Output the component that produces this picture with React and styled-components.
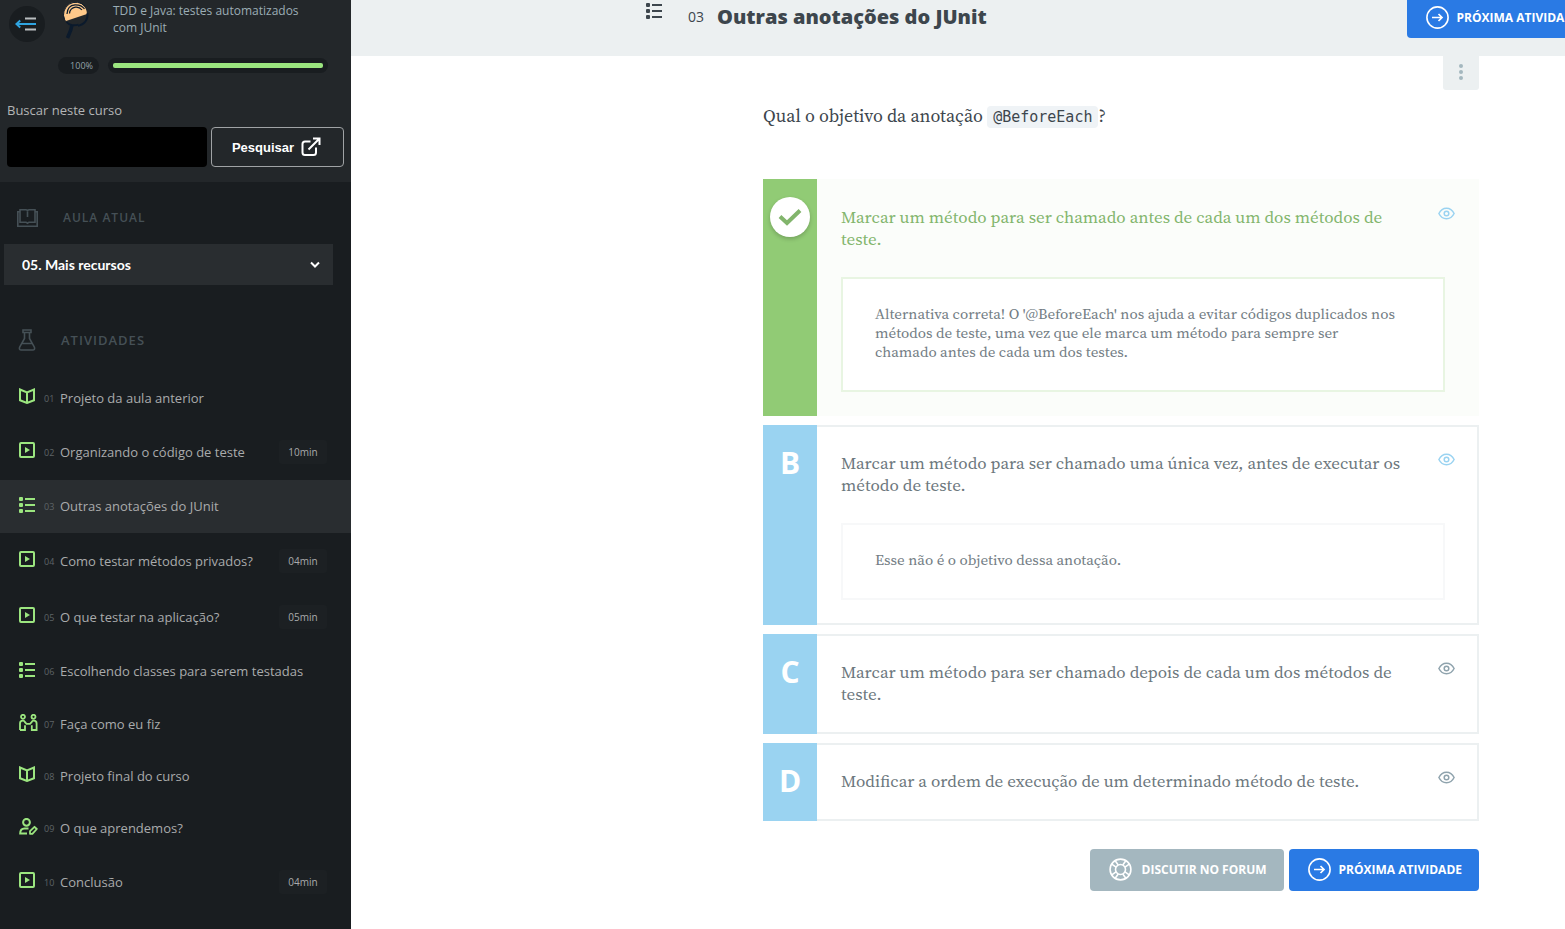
import { useState } from 'react';
import styled, { createGlobalStyle } from 'styled-components';

const GlobalStyle = createGlobalStyle`
  * {
    box-sizing: border-box;
  }

  body {
    margin: 0;
    background-color: #ffffff;
    font-family: 'Open Sans', 'Noto Sans', sans-serif;
    overflow-x: hidden;
  }

  h1, h2, p, ul {
    margin: 0;
    padding: 0;
  }

  ul {
    list-style: none;
  }

  button {
    font-family: inherit;
    cursor: pointer;
  }

  svg {
    display: block;
    flex-shrink: 0;
  }
`;

const serif = "'Source Serif Pro', 'Source Serif 4', 'Noto Serif CJK SC', 'Noto Serif CJK JP', 'Noto Serif', 'Liberation Serif', serif";

const Page = styled.div`
  display: flex;
  min-height: 100vh;
`;

const Sidebar = styled.aside`
  width: 351px;
  flex-shrink: 0;
  background-color: #191d20;
`;

const CourseHeader = styled.header`
  padding: 2px 7px 15px;
  background-color: #23272a;
`;

const CourseTop = styled.div`
  display: flex;
  align-items: flex-start;
`;

const MenuButton = styled.button`
  display: flex;
  align-items: center;
  justify-content: center;
  width: 36px;
  height: 36px;
  margin: 4px 16px 0 2px;
  padding: 0 2px 0 0;
  border: none;
  border-radius: 50%;
  background-color: #191d20;
`;

const CourseName = styled.a`
  display: flex;
  flex: 1;
  gap: 22px;
  color: #9badb5;
  font-size: 12px;
  line-height: 17px;
  text-decoration: none;

  span {
    max-width: 200px;
  }
`;

const Progress = styled.div`
  display: flex;
  align-items: center;
  gap: 9px;
  margin: 15px 16px 0 51px;
`;

const Percent = styled.span`
  width: 41px;
  padding-right: 6px;
  border-radius: 9px;
  background-color: #191d20;
  color: #94a3aa;
  font-size: 9px;
  line-height: 17px;
  text-align: right;
`;

const Track = styled.div`
  flex: 1;
  padding: 5px;
  border-radius: 8px;
  background-color: #191d20;

  div {
    height: 5px;
    border-radius: 2px;
    background-color: #9be57f;
  }
`;

const Search = styled.form`
  margin-top: 27px;

  label {
    display: block;
    color: #b3b5b6;
    font-size: 13px;
    line-height: 18px;
  }

  div {
    display: flex;
    gap: 4px;
    margin-top: 8px;
  }

  input {
    flex: 1;
    min-width: 0;
    height: 40px;
    padding: 0 12px;
    border: none;
    border-radius: 4px;
    background-color: #000000;
    color: #ffffff;
  }

  button {
    display: flex;
    align-items: center;
    justify-content: center;
    gap: 7px;
    width: 133px;
    height: 40px;
    padding: 0 2px 0 0;
    border: 1px solid #a0a3a5;
    border-radius: 4px;
    background: none;
    color: #ffffff;
    font-family: 'Liberation Sans', Arial, sans-serif;
    font-size: 13px;
    font-weight: bold;
  }
`;

const SectionTitle = styled.h2`
  display: flex;
  align-items: center;
  gap: 25px;
  padding-left: 17px;
  color: #455056;
  font-size: ${({ $large }) => ($large ? '13px' : '12px')};
  font-weight: 600;
  letter-spacing: 1px;
  line-height: 22px;
  text-transform: uppercase;
`;

const LessonSection = styled.section`
  padding: 25px 18px 0 0;
`;

const SelectBox = styled.div`
  position: relative;
  margin: 15px 0 0 4px;

  select {
    width: 100%;
    height: 41px;
    padding: 0 18px;
    border: none;
    border-radius: 0;
    appearance: none;
    background-color: #292d30;
    color: #ffffff;
    font-family: Lato, sans-serif;
    font-size: 14px;
    font-weight: bold;
  }

  svg {
    position: absolute;
    top: 17px;
    right: 13px;
    pointer-events: none;
  }
`;

const ActivitySection = styled.section`
  padding: 44px 0 19px;
`;

const ActivityList = styled.ul`
  margin-top: 21px;
`;

const rowHeights = { video: 56, quiz: 53 };

const Activity = styled.li`
  a {
    display: flex;
    align-items: center;
    height: ${({ $kind }) => rowHeights[$kind] || 52}px;
    padding: 0 24px 0 19px;
    background-color: ${({ $active }) => ($active ? '#292d30' : 'transparent')};
    color: #a9abac;
    font-size: 13px;
    line-height: 17px;
    text-decoration: none;
  }
`;

const ActivityIcon = styled.span`
  width: 18px;
  margin: 0 7px 4px 0;
  color: #9be57f;
`;

const ActivityNumber = styled.span`
  width: 16px;
  color: #5e6467;
  font-size: 9px;
`;

const ActivityName = styled.span`
  flex: 1;
`;

const Duration = styled.span`
  width: 48px;
  border-radius: 3px;
  background-color: #1c2023;
  color: #a9abac;
  font-size: 10px;
  line-height: 24px;
  text-align: center;
`;

const Main = styled.main`
  flex: 1;
  min-width: 0;
`;

const TitleBar = styled.header`
  display: flex;
  align-items: flex-start;
  height: 56px;
  padding-left: 295px;
  background-color: #ecf0f1;
  color: #3d464d;
  overflow: hidden;

  > svg {
    margin-top: 3px;
  }
`;

const Title = styled.h1`
  display: flex;
  flex: 1;
  align-items: center;
  gap: 13px;
  margin-left: 25px;
  font-size: 20px;
  font-weight: 800;
  line-height: 34px;
  white-space: nowrap;

  span {
    font-size: 14px;
    font-weight: 400;
  }
`;

const ActionButton = styled.button`
  display: flex;
  align-items: center;
  gap: ${({ $muted }) => ($muted ? '10px' : '8px')};
  height: 42px;
  padding: 0 17px 2px 19px;
  border: none;
  border-radius: 4px;
  background-color: ${({ $muted }) => ($muted ? '#a4b7bf' : '#2a7ae4')};
  color: #ffffff;
  font-size: 12px;
  font-weight: 700;
  text-transform: uppercase;
  white-space: nowrap;
`;

const TopButton = styled(ActionButton)`
  height: 38px;
  margin-right: -32px;
  padding-bottom: 4px;
  border-radius: 0 0 4px 4px;
`;

const Content = styled.div`
  max-width: 716px;
  margin: 0 86px 38px auto;
`;

const MoreButton = styled.button`
  display: flex;
  align-items: center;
  justify-content: center;
  width: 36px;
  height: 34px;
  margin-left: auto;
  padding: 0 0 2px;
  border: none;
  border-radius: 0 0 3px 3px;
  background-color: #ecf0f1;
`;

const Question = styled.p`
  margin-top: 14px;
  color: #3d464d;
  font-family: ${serif};
  font-size: 18px;
  line-height: 24px;

  code {
    padding: 2px 6px;
    border-radius: 4px;
    background-color: #eff3f6;
    font-family: 'DejaVu Sans Mono', monospace;
    font-size: 15px;
  }
`;

const Options = styled.ul`
  display: flex;
  flex-direction: column;
  gap: 9px;
  margin-top: 50px;
`;

const Option = styled.li`
  display: flex;
  background-color: ${({ $correct }) => ($correct ? '#fbfdfa' : '#ffffff')};
`;

const OptionLetter = styled.div`
  display: flex;
  justify-content: center;
  width: 54px;
  flex-shrink: 0;
  padding-top: 18px;
  background-color: ${({ $correct }) => ($correct ? '#91cb75' : '#9ad3f1')};
  color: #ffffff;
  font-size: 30px;
  font-weight: 700;
  line-height: 40px;
`;

const CheckCircle = styled.div`
  display: flex;
  align-items: center;
  justify-content: center;
  width: 40px;
  height: 40px;
  border-radius: 50%;
  background-color: #ffffff;
  box-shadow: 0 2px 4px rgba(0, 0, 0, 0.2);
`;

const OptionBody = styled.div`
  flex: 1;
  padding: 25px 32px ${({ $open }) => ($open ? '23px' : '27px')} 24px;
  border: 2px solid #ecf0f1;
  border-left: none;
  ${({ $correct }) => $correct && 'border: none; padding: 27px 34px 24px 24px;'}
`;

const OptionHead = styled.div`
  display: flex;
  align-items: flex-start;
  justify-content: space-between;
  gap: 24px;

  p {
    color: ${({ $correct }) => ($correct ? '#82b56c' : '#6c777d')};
    font-family: ${serif};
    font-size: 17px;
    line-height: 22px;
  }
`;

const EyeButton = styled.button`
  margin: 0 -10px 0 0;
  padding: 0;
  border: none;
  background: none;
  color: ${({ $seen }) => ($seen ? '#9ad3f1' : '#8fa3ad')};
`;

const Feedback = styled.p`
  margin-top: 27px;
  padding: 25px 42px 29px 32px;
  border: 2px solid ${({ $correct }) => ($correct ? '#e8f5e2' : '#f7f8f9')};
  background-color: #ffffff;
  color: #737d84;
  font-family: ${serif};
  font-size: 15px;
  line-height: 19px;
`;

const Actions = styled.div`
  display: flex;
  justify-content: flex-end;
  gap: 5px;
  margin-top: 28px;
`;

const ListIcon = () => (
  <svg width="17" height="16" viewBox="0 0 17 16" fill="currentColor">
    <rect x="0" y="0" width="4" height="4" rx="1" />
    <rect x="0" y="6" width="4" height="4" rx="1" />
    <rect x="0" y="12" width="4" height="4" rx="1" />
    <path d="M6 1h10v2H6zM6 7h10v2H6zM6 13h10v2H6z" />
  </svg>
);

const BookIcon = () => (
  <svg width="17" height="16" viewBox="0 0 17 16" fill="none" stroke="currentColor" strokeWidth="2">
    <path d="M1 1.5L8 4.5L15 1.5V12.2L8 15L1 12.2ZM8 4.5V15" />
  </svg>
);

const VideoIcon = () => (
  <svg width="17" height="16" viewBox="0 0 17 16">
    <rect x="1" y="1" width="14" height="14" rx="1" fill="none" stroke="currentColor" strokeWidth="2" />
    <path d="M6 5L11 8L6 11Z" fill="currentColor" />
  </svg>
);

const PeopleIcon = () => (
  <svg width="19" height="17" viewBox="0 0 19 17" fill="none" stroke="currentColor" strokeWidth="1.8">
    <circle cx="4" cy="2.8" r="2" />
    <circle cx="14.5" cy="2.8" r="2" />
    <path d="M1 16V9.5Q1 6.7 3.8 6.7Q5.4 6.7 6 8.2L7.5 9.8H11L12.6 8.2Q13.2 6.7 14.8 6.7Q17.6 6.7 17.6 9.5V16H12.8V11.2M6 11.2V16H1" />
  </svg>
);

const UserEditIcon = () => (
  <svg width="19" height="17" viewBox="0 0 19 17" fill="none" stroke="currentColor" strokeWidth="2">
    <circle cx="7.5" cy="4.3" r="3.4" />
    <path d="M9.5 10.5H5.5Q1.2 10.5 1.2 15.5H8" />
    <path d="M11 15.8V13.2L15.5 8.8L17.8 11L13.4 15.8Z" strokeWidth="1.8" strokeLinejoin="round" />
  </svg>
);

const icons = {
  text: BookIcon,
  video: VideoIcon,
  quiz: ListIcon,
  people: PeopleIcon,
  review: UserEditIcon,
};

const MenuIcon = () => (
  <svg width="22" height="16" viewBox="0 0 22 16" fill="none" strokeWidth="2">
    <path d="M10 2.5H21M10 13.5H21" stroke="#b9bdbf" />
    <path d="M21 8H2M5.2 4.6L1.4 8L5.2 11.4" stroke="#2fa4e0" />
  </svg>
);

const CourseLogo = () => (
  <svg width="30" height="37" viewBox="0 0 30 37" fill="none">
    <path d="M5 19A11.7 11.7 0 1 1 26 12Z" fill="#ffc98a" />
    <path d="M3.5 17.5A12.4 12.4 0 0 1 24 4.2" stroke="#0b1a2c" />
    <path d="M6 12Q6.5 3.2 14 2.8Q20.5 2.6 23.5 7M8.5 11.5Q9 6 14.5 5.2Q18.5 4.8 21 8" stroke="#0b1a2c" strokeWidth="1.2" />
    <path d="M5.5 20Q7.5 22.5 11 23.2Q15 23.5 17.5 22.5M26.5 11Q27.5 21 17 24" stroke="#0b1a2c" strokeWidth="1.8" />
    <path d="M10.8 23.5L9.8 28L6.5 36" stroke="#0b1a2c" strokeWidth="3.5" />
  </svg>
);

const ExternalIcon = () => (
  <svg width="20" height="20" viewBox="0 0 20 20" fill="none" stroke="currentColor" strokeWidth="2">
    <path d="M9.5 4.5H4Q1.5 4.5 1.5 7V15.5Q1.5 18 4 18H12.5Q15 18 15 15.5V10.5M7.5 12.5L18 2M12 1.5H18.5V8" />
  </svg>
);

const LessonIcon = () => (
  <svg width="21" height="18" viewBox="0 0 21 18" fill="none" stroke="currentColor" strokeWidth="1.6">
    <path d="M3 2.8H.8V17.2H20.2V2.8H18M3 .8H9Q10.5 .8 10.5 2.3Q10.5 .8 12 .8H18V13.2H12L10.5 14.2L9 13.2H3ZM10.5 2.5V8" />
  </svg>
);

const FlaskIcon = () => (
  <svg width="19" height="22" viewBox="0 0 19 22" fill="none" stroke="currentColor" strokeWidth="1.6">
    <path d="M6 1H14V3.5H6ZM7.5 3.5V9.5L2.6 18.2Q1.8 21 4.3 21H15.7Q18.2 21 17.4 18.2L12.5 9.5V3.5M5 14.5H15" />
  </svg>
);

const ArrowCircleIcon = () => (
  <svg width="23" height="23" viewBox="0 0 23 23" fill="none" stroke="currentColor">
    <circle cx="11.5" cy="11.5" r="10.6" strokeWidth="1.6" />
    <path d="M6 11.5H16M12.5 8L16 11.5L12.5 15" strokeWidth="1.7" />
  </svg>
);

const BuoyIcon = () => (
  <svg width="23" height="23" viewBox="0 0 23 23" fill="none" stroke="currentColor" strokeWidth="1.6">
    <circle cx="11.5" cy="11.5" r="10.4" />
    <circle cx="11.5" cy="11.5" r="5" />
    <path d="M2.8 6.2L7 9.2M6.2 2.8L9.2 7M20.2 6.2L16 9.2M16.8 2.8L13.8 7M2.8 16.8L7 13.8M6.2 20.2L9.2 16M20.2 16.8L16 13.8M16.8 20.2L13.8 16" />
  </svg>
);

const EyeIcon = () => (
  <svg width="17" height="14" viewBox="0 0 17 14" fill="none" stroke="currentColor" strokeWidth="1.5">
    <path d="M.9 7.5Q3.5 2.2 8.5 2.2T16.1 7.5Q13.5 12.8 8.5 12.8T.9 7.5Z" />
    <circle cx="8.5" cy="7.5" r="2.3" />
  </svg>
);

const activities = [
  { number: '01', name: 'Projeto da aula anterior', kind: 'text' },
  { number: '02', name: 'Organizando o código de teste', kind: 'video', time: '10min' },
  { number: '03', name: 'Outras anotações do JUnit', kind: 'quiz' },
  { number: '04', name: 'Como testar métodos privados?', kind: 'video', time: '04min' },
  { number: '05', name: 'O que testar na aplicação?', kind: 'video', time: '05min' },
  { number: '06', name: 'Escolhendo classes para serem testadas', kind: 'quiz' },
  { number: '07', name: 'Faça como eu fiz', kind: 'people' },
  { number: '08', name: 'Projeto final do curso', kind: 'text' },
  { number: '09', name: 'O que aprendemos?', kind: 'review' },
  { number: '10', name: 'Conclusão', kind: 'video', time: '04min' },
];

const alternatives = [
  {
    letter: 'A',
    correct: true,
    text: 'Marcar um método para ser chamado antes de cada um dos métodos de teste.',
    feedback:
      "Alternativa correta! O '@BeforeEach' nos ajuda a evitar códigos duplicados nos métodos de teste, uma vez que ele marca um método para sempre ser chamado antes de cada um dos testes.",
  },
  {
    letter: 'B',
    text: 'Marcar um método para ser chamado uma única vez, antes de executar os método de teste.',
    feedback: 'Esse não é o objetivo dessa anotação.',
  },
  {
    letter: 'C',
    text: 'Marcar um método para ser chamado depois de cada um dos métodos de teste.',
  },
  {
    letter: 'D',
    text: 'Modificar a ordem de execução de um determinado método de teste.',
  },
];

const CourseSidebar = () => {
  const [query, setQuery] = useState('');

  return (
    <Sidebar>
      <CourseHeader>
        <CourseTop>
          <MenuButton aria-label="Fechar menu">
            <MenuIcon />
          </MenuButton>
          <CourseName href="#curso">
            <CourseLogo />
            <span>TDD e Java: testes automatizados com JUnit</span>
          </CourseName>
        </CourseTop>
        <Progress>
          <Percent>100%</Percent>
          <Track>
            <div />
          </Track>
        </Progress>
        <Search onSubmit={(e) => e.preventDefault()}>
          <label htmlFor="search">Buscar neste curso</label>
          <div>
            <input id="search" value={query} onChange={(e) => setQuery(e.target.value)} />
            <button type="submit">
              Pesquisar
              <ExternalIcon />
            </button>
          </div>
        </Search>
      </CourseHeader>

      <LessonSection>
        <SectionTitle>
          <LessonIcon />
          Aula atual
        </SectionTitle>
        <SelectBox>
          <select aria-label="Aula atual">
            <option>05. Mais recursos</option>
          </select>
          <svg width="10" height="8" viewBox="0 0 10 8" fill="none" stroke="#ffffff" strokeWidth="2">
            <path d="M1 1.5L5 5.5L9 1.5" />
          </svg>
        </SelectBox>
      </LessonSection>

      <ActivitySection>
        <SectionTitle $large>
          <FlaskIcon />
          Atividades
        </SectionTitle>
        <ActivityList>
          {activities.map(({ number, name, kind, time }) => {
            const Icon = icons[kind];
            return (
              <Activity key={number} $kind={kind} $active={number === '03'}>
                <a href={`#atividade-${number}`}>
                  <ActivityIcon>
                    <Icon />
                  </ActivityIcon>
                  <ActivityNumber>{number}</ActivityNumber>
                  <ActivityName>{name}</ActivityName>
                  {time && <Duration>{time}</Duration>}
                </a>
              </Activity>
            );
          })}
        </ActivityList>
      </ActivitySection>
    </Sidebar>
  );
};

const Alternative = ({ letter, correct, text, feedback }) => (
  <Option $correct={correct}>
    <OptionLetter $correct={correct}>
      {correct ? (
        <CheckCircle>
          <svg width="24" height="18" viewBox="0 0 24 18" fill="none" stroke="#82b56c" strokeWidth="4">
            <path d="M2 8.5L9 15L22 2.5" />
          </svg>
        </CheckCircle>
      ) : (
        letter
      )}
    </OptionLetter>
    <OptionBody $correct={correct} $open={Boolean(feedback)}>
      <OptionHead $correct={correct}>
        <p>{text}</p>
        <EyeButton $seen={Boolean(feedback)} aria-label="Ver opinião do instrutor">
          <EyeIcon />
        </EyeButton>
      </OptionHead>
      {feedback && <Feedback $correct={correct}>{feedback}</Feedback>}
    </OptionBody>
  </Option>
);

const App = () => {
  return (
    <>
      <GlobalStyle />
      <Page>
        <CourseSidebar />
        <Main>
          <TitleBar>
            <ListIcon />
            <Title>
              <span>03</span>
              Outras anotações do JUnit
            </Title>
            <TopButton>
              <ArrowCircleIcon />
              Próxima atividade
            </TopButton>
          </TitleBar>
          <Content>
            <MoreButton aria-label="Mais opções">
              <svg width="4" height="16" viewBox="0 0 4 16" fill="#a4b7bf">
                <circle cx="2" cy="2" r="2" />
                <circle cx="2" cy="8" r="2" />
                <circle cx="2" cy="14" r="2" />
              </svg>
            </MoreButton>
            <Question>
              Qual o objetivo da anotação <code>@BeforeEach</code>?
            </Question>
            <Options>
              {alternatives.map((item) => (
                <Alternative key={item.letter} {...item} />
              ))}
            </Options>
            <Actions>
              <ActionButton $muted>
                <BuoyIcon />
                Discutir no forum
              </ActionButton>
              <ActionButton>
                <ArrowCircleIcon />
                Próxima atividade
              </ActionButton>
            </Actions>
          </Content>
        </Main>
      </Page>
    </>
  );
};

export default App;
